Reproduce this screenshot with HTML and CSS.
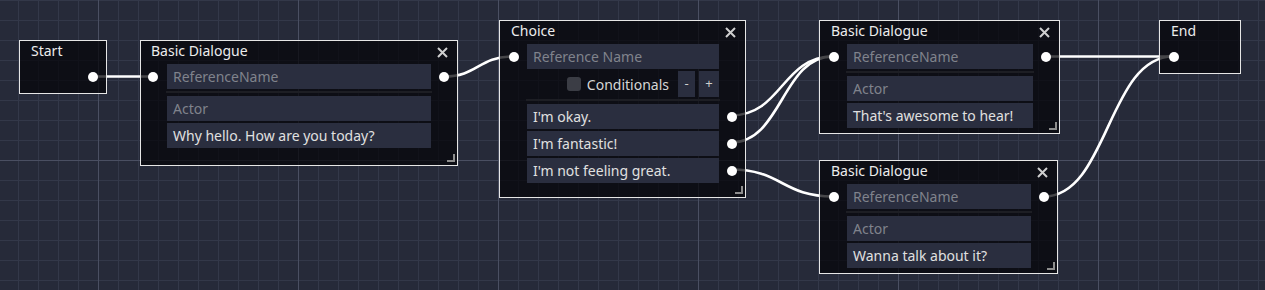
FILE: index.html
```html
<!DOCTYPE html>
<html lang="en">
<head>
    <meta charset="UTF-8">
    <title>Dialogue Graph</title>
    <link rel="stylesheet" href="styles.css">
</head>
<body>
    <div class="graph">
        <!-- connections sit under the nodes -->
        <svg class="wires" width="1265" height="290" viewBox="0 0 1265 290">
            <path d="M93 76.5 L153 76.5"/>
            <path d="M444 76.5 C478 76.5 478 56.5 513 56.5"/>
            <path d="M731 115.5 C782 115.5 782 56.5 833 56.5"/>
            <path d="M731 142.5 C782 142.5 782 56.5 833 56.5"/>
            <path d="M731 169.5 C782 169.5 782 196.5 833 196.5"/>
            <path d="M1046 56.5 L1173 56.5"/>
            <path d="M1044 196.5 C1108 196.5 1108 56.5 1173 56.5"/>
        </svg>

        <div class="node n-start">
            <div class="title">Start</div>
            <div class="row">
                <span class="slot"></span>
                <span></span>
                <span class="slot"><i class="port"></i></span>
            </div>
        </div>

        <div class="node n-bd1">
            <div class="title">Basic Dialogue</div>
            <svg class="close" width="11" height="11" viewBox="0 0 11 11"><path d="M1 1 L10 10 M10 1 L1 10"/></svg>
            <div class="row">
                <span class="slot"><i class="port"></i></span>
                <div class="field placeholder">ReferenceName</div>
                <span class="slot"><i class="port"></i></span>
            </div>
            <div class="row"><span></span><div class="sep"></div><span></span></div>
            <div class="row"><span></span><div class="field placeholder">Actor</div><span></span></div>
            <div class="row gap"><span></span><div class="field">Why hello. How are you today?</div><span></span></div>
            <i class="grip"></i>
        </div>

        <div class="node n-choice">
            <div class="title">Choice</div>
            <svg class="close" width="11" height="11" viewBox="0 0 11 11"><path d="M1 1 L10 10 M10 1 L1 10"/></svg>
            <div class="row">
                <span class="slot"><i class="port"></i></span>
                <div class="field placeholder">Reference Name</div>
                <span></span>
            </div>
            <div class="row gap">
                <span></span>
                <div class="conds">
                    <i class="check"></i>
                    <span class="cond-label">Conditionals</span>
                    <span class="btn minus">-</span>
                    <span class="btn plus">+</span>
                </div>
                <span></span>
            </div>
            <div class="row"><span></span><div class="sep"></div><span></span></div>
            <div class="row">
                <span></span>
                <div class="field">I'm okay.</div>
                <span class="slot"><i class="port"></i></span>
            </div>
            <div class="row gap">
                <span></span>
                <div class="field">I'm fantastic!</div>
                <span class="slot"><i class="port"></i></span>
            </div>
            <div class="row gap">
                <span></span>
                <div class="field">I'm not feeling great.</div>
                <span class="slot"><i class="port"></i></span>
            </div>
            <i class="grip"></i>
        </div>

        <div class="node n-bd2">
            <div class="title">Basic Dialogue</div>
            <svg class="close" width="11" height="11" viewBox="0 0 11 11"><path d="M1 1 L10 10 M10 1 L1 10"/></svg>
            <div class="row">
                <span class="slot"><i class="port"></i></span>
                <div class="field placeholder">ReferenceName</div>
                <span class="slot"><i class="port"></i></span>
            </div>
            <div class="row"><span></span><div class="sep"></div><span></span></div>
            <div class="row"><span></span><div class="field placeholder">Actor</div><span></span></div>
            <div class="row gap"><span></span><div class="field">That's awesome to hear!</div><span></span></div>
            <i class="grip"></i>
        </div>

        <div class="node n-bd3">
            <div class="title">Basic Dialogue</div>
            <svg class="close" width="11" height="11" viewBox="0 0 11 11"><path d="M1 1 L10 10 M10 1 L1 10"/></svg>
            <div class="row">
                <span class="slot"><i class="port"></i></span>
                <div class="field placeholder">ReferenceName</div>
                <span class="slot"><i class="port"></i></span>
            </div>
            <div class="row"><span></span><div class="sep"></div><span></span></div>
            <div class="row"><span></span><div class="field placeholder">Actor</div><span></span></div>
            <div class="row gap"><span></span><div class="field">Wanna talk about it?</div><span></span></div>
            <i class="grip"></i>
        </div>

        <div class="node n-end">
            <div class="title">End</div>
            <div class="row">
                <span class="slot"><i class="port"></i></span>
                <span></span>
                <span class="slot"></span>
            </div>
        </div>
    </div>
</body>
</html>
```

FILE: styles.css
```css
body {
    margin: 0;
    padding: 0;
    background-color: #262a39;
    font-family: "Noto Sans", "Open Sans", sans-serif;
    font-size: 14px;
    color: #e0e0e0;
}
.graph {
    position: relative;
    width: 1265px;
    height: 290px;
    overflow: hidden;
    background-color: #262a39;
    background-image:
        linear-gradient(to right, #4a4f62 1px, transparent 1px),
        linear-gradient(to bottom, #4a4f62 1px, transparent 1px),
        linear-gradient(to right, #333849 1px, transparent 1px),
        linear-gradient(to bottom, #333849 1px, transparent 1px);
    background-size: 200px 100%, 100% 200px, 20px 100%, 100% 20px;
    background-position: 98px 0, 0 160px, 18px 0, 0 0;
}
.wires {
    position: absolute;
    left: 0;
    top: 0;
}
.wires path {
    fill: none;
    stroke: #ffffff;
    stroke-width: 2.6;
}

/* nodes */
.node {
    position: absolute;
    box-sizing: border-box;
    border: 1px solid #e6e6e6;
    background-color: rgba(6, 6, 9, 0.74);
}
.n-start { left: 19px; top: 40px; width: 88px; height: 54px; }
.n-bd1 { left: 140px; top: 40px; width: 318px; height: 126px; }
.n-choice { left: 499px; top: 20px; width: 247px; height: 178px; }
.n-bd2 { left: 819px; top: 20px; width: 241px; height: 114px; }
.n-bd3 { left: 819px; top: 160px; width: 239px; height: 114px; }
.n-end { left: 1159px; top: 20px; width: 82px; height: 54px; }

.title {
    height: 23px;
    line-height: 19px;
    padding-left: 11px;
    color: #ececec;
}
.n-bd1 .title {
    padding-left: 10px;
}
.close {
    position: absolute;
    top: 6px;
    right: 9px;
}
.close path {
    stroke: #cfcfcf;
    stroke-width: 2;
}
.row {
    display: grid;
    grid-template-columns: 27px 1fr 26px;
    align-items: center;
}
.n-bd1 .row {
    grid-template-columns: 26px 1fr 26px;
}
.row.gap {
    margin-top: 2px;
}
.slot {
    display: flex;
    justify-content: center;
    align-items: center;
    height: 25px;
}
.port {
    display: block;
    width: 10px;
    height: 10px;
    border-radius: 50%;
    background-color: #ffffff;
}
.n-bd1 .row .slot:first-child {
    justify-content: flex-start;
    padding-left: 7px;
}
.field {
    height: 25px;
    line-height: 25px;
    padding: 0 6px;
    background-color: #2a2e3f;
    white-space: nowrap;
    overflow: hidden;
}
.placeholder {
    color: #80838c;
}
.sep {
    height: 2px;
    margin: 2px -1px 3px;
    background-color: #1d1e24;
}

/* choice controls */
.conds {
    display: flex;
    justify-content: flex-end;
    align-items: center;
    height: 26px;
}
.check {
    display: block;
    width: 14px;
    height: 14px;
    border-radius: 3px;
    background-color: #3b3d45;
    margin-right: 6px;
}
.cond-label {
    color: #d6d6d6;
    margin-right: 9px;
}
.btn {
    height: 26px;
    line-height: 25px;
    text-align: center;
    background-color: #2a2e3f;
    color: #cfcfcf;
    font-size: 13px;
}
.minus {
    width: 17px;
    margin-right: 4px;
}
.plus {
    width: 20px;
}

.grip {
    position: absolute;
    right: 2px;
    bottom: 3px;
    width: 6px;
    height: 6px;
    border-right: 2px solid #8e8e8e;
    border-bottom: 2px solid #8e8e8e;
}
```
